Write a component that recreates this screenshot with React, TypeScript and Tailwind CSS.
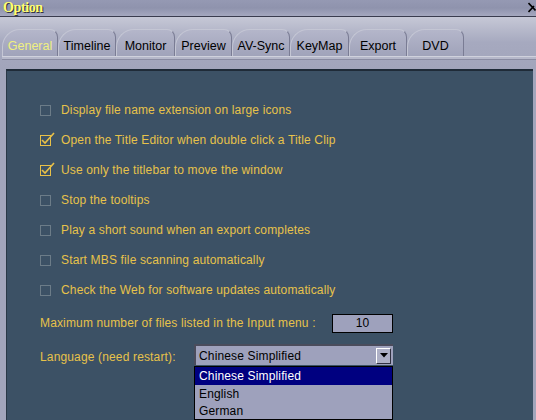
import React from "react";

const tabs = ["General", "Timeline", "Monitor", "Preview", "AV-Sync", "KeyMap", "Export", "DVD"];
const tabWidths = [56, 58, 59, 57, 58, 59, 58, 57];

const rows: { label: string; checked: boolean }[] = [
  { label: "Display file name extension on large icons", checked: false },
  { label: "Open the Title Editor when double click a Title Clip", checked: true },
  { label: "Use only the titlebar to move the window", checked: true },
  { label: "Stop the tooltips", checked: false },
  { label: "Play a short sound when an export completes", checked: false },
  { label: "Start MBS file scanning automatically", checked: false },
  { label: "Check the Web for software updates automatically", checked: false },
];

function Check({ checked }: { checked: boolean }) {
  return (
    <div className={`relative w-[11px] h-[11px] border shrink-0 ${checked ? "border-[#e8c048]" : "border-[#6c7c88]"}`}>
      {checked && (
        <svg className="absolute -left-[1px] -top-[5px]" width="16" height="16" viewBox="0 0 16 16">
          <polyline points="2,9 5,12 14,2" fill="none" stroke="#e8c048" strokeWidth="1.6" />
        </svg>
      )}
    </div>
  );
}

export default function App() {
  return (
    <div className="w-[536px] h-[420px] overflow-hidden relative bg-[#a2a5bb] text-[12px]" style={{ fontFamily: '"Liberation Sans", Arial, sans-serif' }}>
      {/* title bar */}
      <div className="h-[17px] flex items-center justify-between bg-gradient-to-b from-[#9599b3] via-[#8f93ad] to-[#a5a8bf] border-b border-[#3a3c4e]">
        <span className="pl-[3px] font-bold text-[14px] text-[#ffff70] leading-none tracking-[-0.4px]" style={{ fontFamily: '"Liberation Serif", serif', textShadow: "1px 1px 0 #303040" }}>Option</span>
        <svg width="8" height="12" viewBox="0 0 8 12" className="shrink-0">
          <path d="M0.5 1 L7.5 8.5 M0.5 10 L6 4" stroke="#000" strokeWidth="1.6" fill="none" />
        </svg>
      </div>
      {/* tabs area */}
      <div className="h-[51px] bg-gradient-to-b from-[#c6c8d6] via-[#a6a9bf] to-[#a2a5bb] pt-[12px] pl-[2px]">
        <div className="flex h-[27px] items-end">
          {tabs.map((t, i) => (
            <div
              key={t}
              style={{ width: tabWidths[i] }}
              className={`h-[27px] rounded-tl-[18px] rounded-tr-[8px] border-t border-l border-[#c4c6d4] border-r-[#7a7c94] border-r flex items-end justify-center shrink-0 bg-gradient-to-b from-[#b4b6ca] to-[#a0a3ba] text-[12.5px] leading-none ${i === 0 ? "text-[#f0f080]" : "text-black"}`}
            >
              <span className="pb-[4px]">{t}</span>
            </div>
          ))}
        </div>
        <div className="h-[4px] bg-[#b6b8ca] border-t border-[#cfd1dc] border-b border-b-[#8a8ca2]"></div>
      </div>
      {/* panel */}
      <div className="absolute left-[6px] top-[69px] right-[3px] bottom-0 bg-[#3c5165] border-t-2 border-t-[#1f2b38] border-l border-l-[#2a3846]">
        <div className="pl-[33px] pt-[24px] flex flex-col text-[#e7c24a] tracking-[0.15px]">
          {rows.map((r) => (
            <div key={r.label} className="h-[30px] flex items-center gap-[10px]">
              <Check checked={r.checked} />
              <span>{r.label}</span>
            </div>
          ))}
          <div className="flex items-center h-[30px] mt-[3px]">
            <span className="w-[292px]">Maximum number of files listed in the Input menu :</span>
            <div className="w-[61px] h-[19px] bg-[#9ea1bc] border border-black text-black flex items-center justify-center">10</div>
          </div>
          <div className="flex items-start mt-[6px]">
            <span className="w-[154px] pt-[4px]">Language (need restart):</span>
            <div className="flex flex-col w-[199px]">
              <div className="h-[21px] bg-[#9ea1bc] border-t-2 border-l-2 border-[#4a4c5c] flex items-center justify-between text-black">
                <span className="pl-[3px]">Chinese Simplified</span>
                <div className="w-[15px] h-[16px] mr-[2px] bg-[#aeb0c6] border-t border-l border-white border-r border-b border-r-[#303040] border-b-[#303040] flex items-center justify-center">
                  <svg width="8" height="5" viewBox="0 0 8 5"><polygon points="0,0 8,0 4,4.5" fill="#000" /></svg>
                </div>
              </div>
              <div className="border border-black border-t-0 bg-[#9ea1bc] mt-[1px]">
                <div className="h-[19px] bg-[#000080] text-white pl-[4px] flex items-center border-t border-black">Chinese Simplified</div>
                <div className="h-[17px] text-black pl-[4px] flex items-center">English</div>
                <div className="h-[17px] text-black pl-[4px] flex items-center">German</div>
              </div>
            </div>
          </div>
        </div>
      </div>
    </div>
  );
}
